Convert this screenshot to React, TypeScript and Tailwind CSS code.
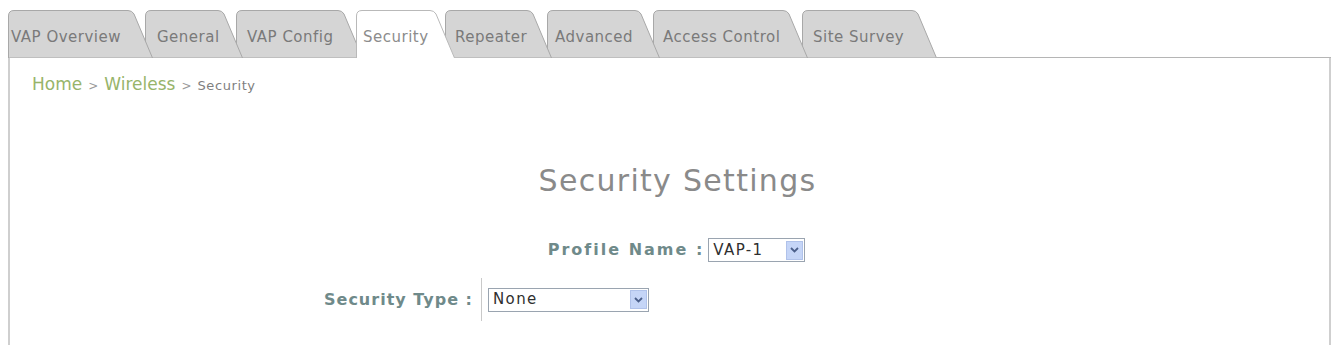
import React from "react";

type Tab = {
  label: string;
  w: number;
  box: string;
  text: string;
  active?: boolean;
};

const tabs: Tab[] = [
  { label: "VAP Overview", w: 145, box: "w-[145px] z-[8]", text: "pl-[3px]" },
  { label: "General", w: 98, box: "w-[98px] ml-[-8px] z-[7]", text: "pl-[12px]" },
  { label: "VAP Config", w: 127, box: "w-[127px] ml-[-7px] z-[6]", text: "pl-[11px]" },
  { label: "Security", w: 99, box: "w-[99px] ml-[-7px] z-[20]", text: "pl-[7px]", active: true },
  { label: "Repeater", w: 107, box: "w-[107px] ml-[-10px] z-[5]", text: "pl-[10px]" },
  { label: "Advanced", w: 113, box: "w-[113px] ml-[-5px] z-[4]", text: "pl-[8px]" },
  { label: "Access Control", w: 155, box: "w-[155px] ml-[-7px] z-[3]", text: "pl-[10px]" },
  { label: "Site Survey", w: 135, box: "w-[135px] ml-[-6px] z-[2]", text: "pl-[11px]" },
];

function TabShape({ w, active }: { w: number; active?: boolean }) {
  const h = 48;
  const s = 20;
  const top = `M0.5,${h} L0.5,6 Q0.5,0.5 6,0.5 L${w - s - 5},0.5 Q${w - s - 1},0.5 ${w - s + 1},4 L${w - 0.5},${h}`;
  return (
    <svg className="absolute inset-0" width={w} height={h} viewBox={`0 0 ${w} ${h}`}>
      <path d={top + " Z"} fill={active ? "#ffffff" : "#d5d5d5"} stroke="none" />
      <path d={active ? top : top + " Z"} fill="none" stroke={active ? "#b9b9b9" : "#a8a8a8"} strokeWidth="1" />
    </svg>
  );
}

function Chevron() {
  return (
    <div className="w-[17px] h-[19px] bg-[#c5d5f7] border border-[#b0c2ea] flex items-center justify-center">
      <svg width="9" height="6" viewBox="0 0 9 6">
        <path d="M1,1 L4.5,4.5 L8,1" fill="none" stroke="#4b5f8a" strokeWidth="1.8" />
      </svg>
    </div>
  );
}

function FakeSelect({ value, width }: { value: string; width: string }) {
  return (
    <div className={`${width} h-[24px] border border-[#9aa4b0] bg-white flex items-center justify-between pl-[4px] pr-[1px]`}>
      <span className="text-[15px] tracking-[1.4px] text-[#2f2f2f] leading-none">{value}</span>
      <Chevron />
    </div>
  );
}

export default function App() {
  return (
    <div className="w-[1334px] h-[345px] bg-white overflow-hidden font-['DejaVu_Sans',Verdana,sans-serif]">
      <div className="flex items-end pt-[10px] pl-[8px] pr-[3px]">
        {tabs.map((t) => (
          <div key={t.label} className={`relative h-[48px] shrink-0 flex items-center pt-[6px] ${t.box}`}>
            <TabShape w={t.w} active={t.active} />
            <span
              className={`relative whitespace-nowrap text-[15px] tracking-[0.5px] ${t.text} ${
                t.active ? "text-[#8c8c8c]" : "text-[#7a7a7a]"
              }`}
            >
              {t.label}
            </span>
          </div>
        ))}
        <div className="flex-1 h-[48px] border-b border-[#b5b5b5]" />
      </div>

      <div className="ml-[8px] w-[1323px] h-[287px] border-l-2 border-r-2 border-[#cfcfcf]">
        <div className="pl-[22px] pt-[14px] h-[39px] flex items-baseline whitespace-nowrap">
          <span className="text-[17px] text-[#97b46a]">Home</span>
          <span className="text-[12px] text-[#9a9a9a] mx-[6px]">&gt;</span>
          <span className="text-[17px] text-[#97b46a]">Wireless</span>
          <span className="text-[12px] text-[#9a9a9a] mx-[6px]">&gt;</span>
          <span className="text-[13px] tracking-[0.6px] text-[#7f7f7f]">Security</span>
        </div>

        <h1 className="mt-[65px] pl-[16px] text-center text-[30px] leading-[38px] tracking-[1.3px] text-[#8a8a8a]">
          Security Settings
        </h1>

        <div className="mt-[38px] flex items-center justify-center gap-[4px] pl-[14px]">
          <span className="text-[16px] font-bold tracking-[2px] text-[#6f8a8a]">Profile Name :</span>
          <FakeSelect value="VAP-1" width="w-[97px]" />
        </div>

        <div className="mt-[16px] flex items-center">
          <div className="w-[463px] text-right text-[16px] font-bold tracking-[1px] text-[#6f8a8a]">
            Security Type :
          </div>
          <div className="ml-[8px] w-px h-[43px] bg-[#c9c9c9]" />
          <div className="ml-[6px]">
            <FakeSelect value="None" width="w-[161px]" />
          </div>
        </div>
      </div>
    </div>
  );
}
